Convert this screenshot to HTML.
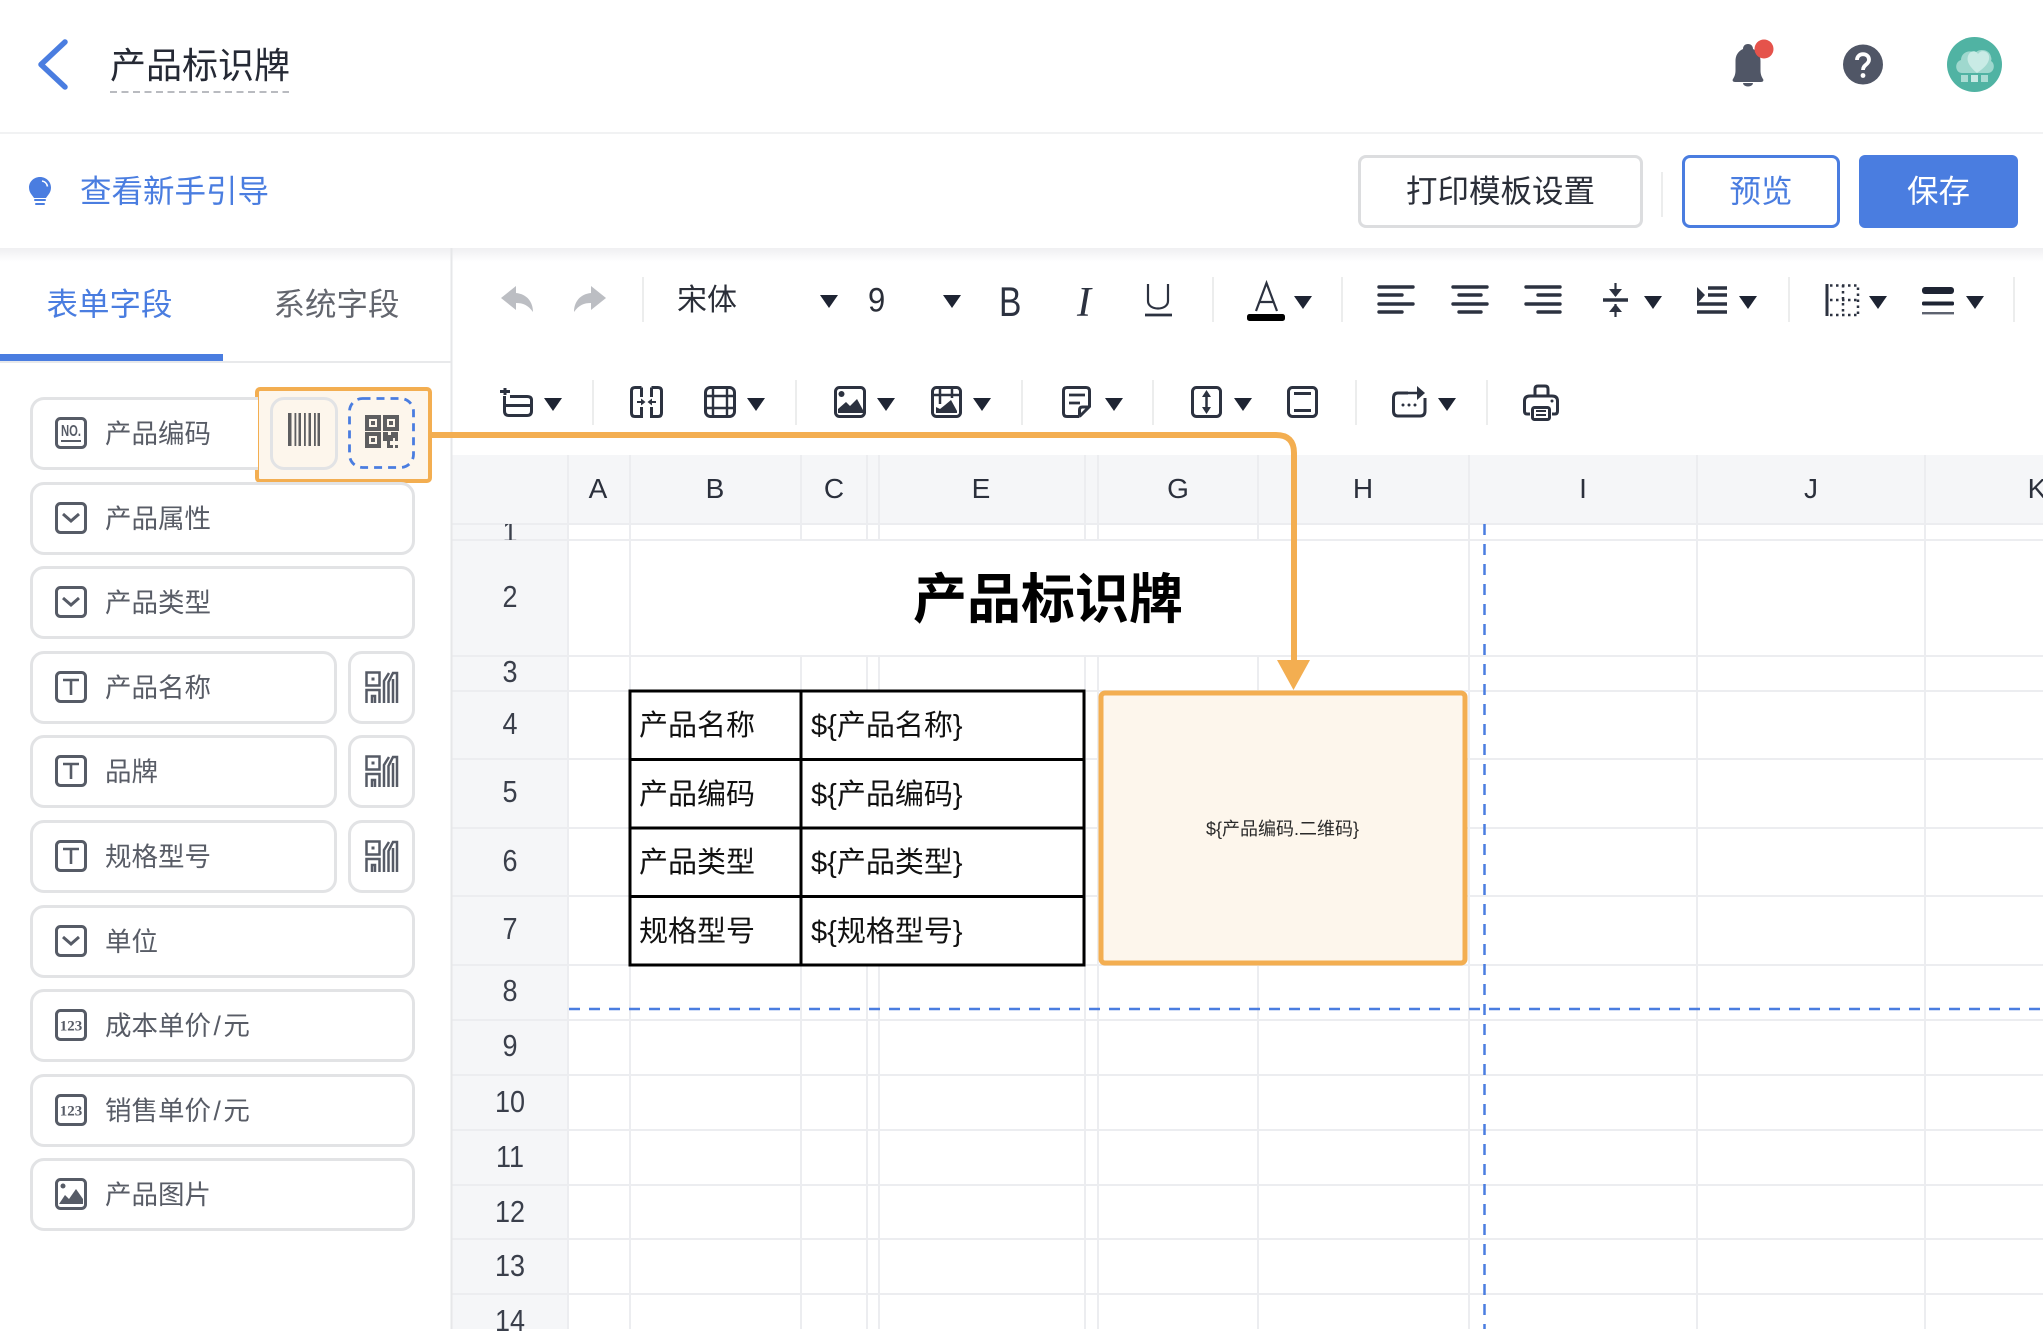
<!DOCTYPE html>
<html lang="zh"><head><meta charset="utf-8"><title>产品标识牌</title>
<style>
html,body{margin:0;padding:0;background:#fff}
body{width:2043px;height:1329px;position:relative;overflow:hidden;font-family:"Liberation Sans","Noto Sans CJK SC",sans-serif;color:#2a2e38}
.a{position:absolute}
.t{position:absolute;white-space:nowrap;line-height:1}
.f{position:absolute;box-sizing:border-box;height:73px;border:3px solid #e2e3e5;border-radius:14px;background:#fff}
.l{position:absolute;left:105px;font-size:26.5px;color:#585c66;white-space:nowrap;line-height:1}
.l span{margin:0 2.5px}
.h{position:absolute;font-size:28px;color:#2b303c;width:60px;text-align:center;line-height:1;top:475px}
.n{position:absolute;left:480px;width:60px;text-align:center;font-size:27px;color:#3a3f4b;line-height:1;transform:scaleY(1.12)}
.c{position:absolute;font-size:29px;color:#111;white-space:nowrap;line-height:1}
svg{position:absolute;left:0;top:0;overflow:visible}
</style></head><body>

<!-- header shadow -->
<div class="a" style="left:0;top:248px;width:2043px;height:14px;background:linear-gradient(#efeff1,#fff);z-index:0"></div>

<svg width="2043" height="1329" viewBox="0 0 2043 1329" style="z-index:1">
<!-- spreadsheet backgrounds -->
<rect x="452" y="455" width="1591" height="69" fill="#f5f6f8"/>
<rect x="452" y="524" width="117" height="805" fill="#f5f6f8"/>
<g stroke="#ecedf0" stroke-width="2" fill="none">
<path d="M452 524H2043M452 540H2043M452 656H2043M452 691H2043M452 759H2043M452 828H2043M452 896H2043M452 965H2043M452 1020H2043M452 1075H2043M452 1130H2043M452 1185H2043M452 1239H2043M452 1294H2043"/>
<path d="M568 455V1329M630 455V1329M1469 455V1329M1697 455V1329M1925 455V1329"/>
<path d="M801 455V540M867 455V540M879 455V540M1085 455V540M1098 455V540M1258 455V540"/>
<path d="M801 656V1329M867 656V1329M879 656V1329M1085 656V1329M1098 656V1329M1258 656V1329"/>
</g>
<!-- borders of panels -->
<path d="M451.500 248V1329" stroke="#e6e7e9" stroke-width="2"/>
<path d="M0 133H2043" stroke="#f1f2f3" stroke-width="2"/>
<path d="M0 362H451" stroke="#e8e9eb" stroke-width="2"/>
<rect x="0" y="354" width="223" height="7" fill="#4a7de0"/>
<!-- table -->
<g stroke="#000" stroke-width="3" fill="#fff">
<rect x="630" y="691" width="454" height="274"/>
<path d="M801 691V965M630 759.500H1084M630 828H1084M630 896.500H1084" fill="none"/>
</g>
<!-- orange box -->
<rect x="1101" y="693" width="364" height="270" rx="4" fill="#fdf6ec" stroke="#f3ae51" stroke-width="5"/>
<!-- dashed guides -->
<path d="M1484.500 524V1329" stroke="#4a7de0" stroke-width="2.500" stroke-dasharray="11 9"/>
<path d="M569 1009H2043" stroke="#4a7de0" stroke-width="2.500" stroke-dasharray="11 9"/>
</svg>

<!-- header -->
<svg width="2043" height="400" style="z-index:3">
<path d="M65 42L41 64.500L65 87" fill="none" stroke="#4a7de0" stroke-width="5.500" stroke-linecap="round" stroke-linejoin="round"/>
<path d="M110 92H289" stroke="#b9bbc0" stroke-width="2" stroke-dasharray="7 4.500"/>
<!-- bulb -->
<path d="M40 177c-6.500 0-11 5-11 10.500 0 5 3 7.500 5 10.500h12c2-3 5-5.500 5-10.500C51 182 46.500 177 40 177z" fill="#4a7de0"/>
<path d="M35 200h10M36 204h8" stroke="#4a7de0" stroke-width="2" stroke-linecap="round"/>
<path d="M42 181c3 .5 5 2.500 5.500 5.500" stroke="#fff" stroke-width="1.600" fill="none"/>
<!-- bell -->
<path d="M1748 44c-3 0-5 2-5 5-5.500 2.500-7.500 7-7.500 12v9c0 4.500-1 6.500-2.500 9-1 1.500 0 3 2 3h26c2 0 3-1.500 2-3-1.500-2.500-2.500-4.500-2.500-9v-9c0-5-2-9.500-7.500-12 0-3-2-5-5-5z" fill="#505666"/>
<path d="M1743 83a5 3.500 0 0 0 10 0z" fill="#505666"/>
<circle cx="1764" cy="49" r="9.500" fill="#e5534b"/>
<!-- help -->
<circle cx="1863" cy="64.500" r="20" fill="#505666"/>
<path d="M1857 60c0-3.500 2.700-5.800 6-5.800 3.400 0 6 2.200 6 5.400 0 5-6 5-6 10.400" fill="none" stroke="#fff" stroke-width="3.800"/>
<circle cx="1863" cy="75.500" r="2.400" fill="#fff"/>
<!-- avatar -->
<circle cx="1974.500" cy="64.500" r="27.500" fill="#50b3a3"/>
<path d="M1962 73c-7 0-8-11-1-13 0-7 8-11 14-7 4-5 15-4 16 4 1 2 0 4 0 4 5 3 3 12-3 12z" fill="#9fd8ce"/>
<path d="M1977 73c-6-5-11-11-9-17 2-6 8-6 10-2 3-5 10-3 11 2 1 7-5 12-12 17z" fill="#c9ebe5"/>
<rect x="1961" y="75" width="7" height="7" fill="#a9dcd3"/><rect x="1971" y="75" width="7" height="7" fill="#c7e9e3"/><rect x="1981" y="75" width="7" height="7" fill="#a9dcd3"/>
<path d="M1662 172V217" stroke="#eceded" stroke-width="2"/>
</svg>
<div class="t" style="left:110px;top:47.500px;font-size:36px;color:#252934;z-index:3">产品标识牌</div>
<div class="t" style="left:80px;top:176px;font-size:31.500px;color:#4a7de0;z-index:3">查看新手引导</div>
<div class="a" style="left:1358px;top:155px;width:285px;height:73px;box-sizing:border-box;border:3px solid #dcdddf;border-radius:8px;background:#fff;text-align:center;font-size:31.500px;line-height:66px;color:#2a2e38;z-index:3">打印模板设置</div>
<div class="a" style="left:1682px;top:155px;width:158px;height:73px;box-sizing:border-box;border:3px solid #4a7de0;border-radius:8px;background:#fff;text-align:center;font-size:31.500px;line-height:66px;color:#4a7de0;z-index:3">预览</div>
<div class="a" style="left:1859px;top:155px;width:159px;height:73px;border-radius:6px;background:#4a7de0;text-align:center;font-size:31.500px;line-height:72px;color:#fff;z-index:3">保存</div>

<!-- tabs -->
<div class="t" style="left:46.500px;top:289px;font-size:31.500px;color:#4a7de0;z-index:3">表单字段</div>
<div class="t" style="left:273.500px;top:289px;font-size:31.500px;color:#63666e;z-index:3">系统字段</div>

<!-- highlight box behind first row -->
<div class="a" style="left:255px;top:387px;width:177px;height:96px;box-sizing:border-box;border:4.500px solid #f3ae51;border-radius:5px;background:#fdf6ec;z-index:2"></div>

<!-- field rows -->
<div style="position:absolute;left:0;top:0;z-index:3">
<div class="f" style="left:30px;top:397px;width:228px;border-right:0;border-radius:14px 0 0 14px"></div>
<div class="f" style="left:270px;top:397px;width:68px;background:#fdf6ec"></div>
<div class="f" style="left:30px;top:482px;width:385px"></div>
<div class="f" style="left:30px;top:566px;width:385px"></div>
<div class="f" style="left:30px;top:651px;width:307px"></div>
<div class="f" style="left:348px;top:651px;width:67px"></div>
<div class="f" style="left:30px;top:735px;width:307px"></div>
<div class="f" style="left:348px;top:735px;width:67px"></div>
<div class="f" style="left:30px;top:820px;width:307px"></div>
<div class="f" style="left:348px;top:820px;width:67px"></div>
<div class="f" style="left:30px;top:905px;width:385px"></div>
<div class="f" style="left:30px;top:989px;width:385px"></div>
<div class="f" style="left:30px;top:1074px;width:385px"></div>
<div class="f" style="left:30px;top:1158px;width:385px"></div>
<div class="l" style="top:421px">产品编码</div>
<div class="l" style="top:505.500px">产品属性</div>
<div class="l" style="top:590px">产品类型</div>
<div class="l" style="top:675px">产品名称</div>
<div class="l" style="top:759px">品牌</div>
<div class="l" style="top:844px">规格型号</div>
<div class="l" style="top:928.500px">单位</div>
<div class="l" style="top:1013px">成本单价<span>/</span>元</div>
<div class="l" style="top:1098px">销售单价<span>/</span>元</div>
<div class="l" style="top:1182px">产品图片</div>
</div>

<svg width="2043" height="1329" style="z-index:4">
<defs>
<g id="dd"><rect x="1.500" y="1.500" width="29" height="29" rx="4" fill="none" stroke="#565b66" stroke-width="3"/><path d="M8 12l8 7 8-7" fill="none" stroke="#565b66" stroke-width="3"/></g>
<g id="tt"><rect x="1.500" y="1.500" width="29" height="29" rx="4" fill="none" stroke="#565b66" stroke-width="3"/><path d="M8 9H24M16 9V24" fill="none" stroke="#565b66" stroke-width="2.600"/></g>
<g id="num"><rect x="1.500" y="1.500" width="29" height="29" rx="4" fill="none" stroke="#565b66" stroke-width="3"/><text x="16" y="21.500" font-size="15" font-weight="700" text-anchor="middle" fill="#565b66" font-family="Liberation Serif,serif">123</text></g>
<g id="st" fill="none" stroke="#565b66" stroke-width="2.500">
<rect x="1.500" y="1.500" width="13" height="13"/><rect x="6.500" y="6.500" width="3" height="3" fill="#565b66" stroke="none"/>
<path d="M1.500 32V19H14.500V32M7 32V25H10V32"/>
<path d="M19 32V10L24 2M23.500 32V11L28 2H32V32M28 32V8"/>
</g>
<path id="car" d="M0 0H18L9 13z" fill="#1e2433"/>
</defs>

<!-- dashed QR button -->
<rect x="349.500" y="398.500" width="64" height="69" rx="13" fill="none" stroke="#4a7de0" stroke-width="2.800" stroke-dasharray="8 6"/>

<!-- row icons -->
<g transform="translate(55,417)"><rect x="1.500" y="1.500" width="29" height="29" rx="4" fill="none" stroke="#565b66" stroke-width="3"/><text x="6" y="19" font-size="16" font-weight="700" fill="#565b66" textLength="20" lengthAdjust="spacingAndGlyphs" font-family="Liberation Sans,sans-serif">NO.</text><path d="M6 24H26" stroke="#565b66" stroke-width="2"/></g>
<use href="#dd" x="55" y="502"/>
<use href="#dd" x="55" y="586"/>
<use href="#tt" x="55" y="671"/>
<use href="#tt" x="55" y="755"/>
<use href="#tt" x="55" y="840"/>
<use href="#dd" x="55" y="925"/>
<use href="#num" x="55" y="1009"/>
<use href="#num" x="55" y="1094"/>
<g transform="translate(55,1178)"><rect x="1.500" y="1.500" width="29" height="29" rx="4" fill="none" stroke="#565b66" stroke-width="3"/><circle cx="8" cy="8" r="2.500" fill="#565b66"/><path d="M4 26L10 17L14 21L21 11L28 21V26z" fill="#565b66"/></g>
<use href="#st" x="365" y="671"/>
<use href="#st" x="365" y="755"/>
<use href="#st" x="365" y="840"/>
<!-- barcode -->
<g fill="#5e5e60"><rect x="288" y="413" width="3.500" height="33"/><rect x="294.500" y="413" width="1.800" height="33"/><rect x="298.500" y="413" width="2.500" height="33"/><rect x="304" y="413" width="1.800" height="33"/><rect x="308.500" y="413" width="2.500" height="33"/><rect x="314" y="413" width="1.800" height="33"/><rect x="317.500" y="413" width="2.500" height="33"/></g>
<!-- qr -->
<g fill="none" stroke="#5e5e60" stroke-width="4"><rect x="367" y="417" width="12" height="12"/><rect x="385" y="417" width="12" height="12"/><rect x="367" y="434" width="12" height="12"/></g>
<g fill="#5e5e60"><rect x="371" y="421" width="4" height="4"/><rect x="389" y="421" width="4" height="4"/><rect x="371" y="438" width="4" height="4"/><path d="M383 432h5v3h3v-3h7v9h-3v-3h-2v3h-3v7h-3v-7h-4z"/><rect x="390" y="445" width="3" height="3"/><rect x="395" y="445" width="3" height="3"/></g>

<!-- toolbar row 1 -->
<path d="M501 298L516 286V293C527 294 533 302 533 312C528 305 523 303 516 303V310z" fill="#bcbec3"/>
<path d="M606 298L591 286V293C580 294 574 302 574 312C579 305 584 303 591 303V310z" fill="#bcbec3"/>
<g stroke="#eceded" stroke-width="2"><path d="M643 277V322M1213 277V322M1342 277V322M1789 277V322M2014 277V322M593 380V425M796 380V425M1022 380V425M1153 380V425M1356 380V425M1487 380V425"/></g>
<use href="#car" x="820" y="295"/><use href="#car" x="943" y="295"/>
<path d="M1148 284V301C1148 311 1168 311 1168 301V284" fill="none" stroke="#2c3240" stroke-width="2.200"/><path d="M1145 315H1172" stroke="#2c3240" stroke-width="2.800"/>
<path d="M1256 311L1266.500 283L1277 311M1259.500 302H1273.500" fill="none" stroke="#2c3240" stroke-width="2.200"/>
<rect x="1247" y="314" width="38" height="7" rx="2.500" fill="#000"/>
<use href="#car" x="1294" y="296"/>
<g stroke="#2c3240" stroke-width="3.400" stroke-linecap="round">
<path d="M1379 287H1413M1379 295H1402M1379 304H1413M1379 312H1402"/>
<path d="M1453 287H1487M1459 295H1481M1453 304H1487M1459 312H1481"/>
<path d="M1526 287H1560M1538 295H1560M1526 304H1560M1538 312H1560"/>
</g>
<path d="M1603 300H1628" stroke="#2c3240" stroke-width="3.400"/>
<path d="M1615.500 283V296M1615.500 304V317" stroke="#2c3240" stroke-width="2.200"/>
<path d="M1609 289L1615.500 297L1622 289zM1609 312L1615.500 304L1622 312z" fill="#2c3240"/>
<use href="#car" x="1644" y="296"/>
<path d="M1697 287L1705 295L1697 304z" fill="#2c3240"/>
<g stroke="#2c3240" stroke-width="3.400"><path d="M1708 288H1727M1708 295H1727M1697 304H1727M1697 312H1727"/></g>
<use href="#car" x="1739" y="296"/>
<path d="M1827 284V316" stroke="#2c3240" stroke-width="3"/>
<path d="M1830 285.500H1858V315M1830 315H1858M1830 300H1858M1843 285V315" fill="none" stroke="#2c3240" stroke-width="2.500" stroke-dasharray="2.500 3.500"/>
<use href="#car" x="1869" y="296"/>
<rect x="1922" y="287" width="32" height="7" rx="3" fill="#1e2433"/><rect x="1922" y="301.500" width="32" height="4" rx="1.500" fill="#1e2433"/><rect x="1922" y="312" width="32" height="2.400" fill="#5e6370"/>
<use href="#car" x="1966" y="296"/>

<!-- toolbar row 2 -->
<g fill="none" stroke="#2c3240" stroke-width="3">
<!-- insert table -->
<path d="M500 391.500H510M505 388V395" stroke-width="3"/>
<path d="M504.500 396V411Q504.500 415.500 509 415.500H527Q531.500 415.500 531.500 411V400Q531.500 396.500 527 396.500H510M504.500 405.500H531.500"/>
<!-- merge -->
<path d="M641.500 387.500H635Q631.500 387.500 631.500 391V413Q631.500 416.500 635 416.500H641.500V407M641.500 387.500V397M651.500 387.500H658Q661.500 387.500 661.500 391V413Q661.500 416.500 658 416.500H651.500V407M651.500 387.500V397"/>
<!-- borders -->
<rect x="705.500" y="387.500" width="29" height="29" rx="5"/>
<path d="M705 396H735M705 408H735M713 387V417M727 387V417" stroke-width="2.400"/>
<!-- image -->
<rect x="835.500" y="387.500" width="29" height="29" rx="4"/>
<!-- grid image -->
<rect x="932.500" y="387.500" width="28" height="29" rx="4"/>
<path d="M932 395H961M940 387V404M952 387V398" stroke-width="2.500"/>
<!-- doc -->
<path d="M1079.500 416.500H1067Q1063.500 416.500 1063.500 413V391Q1063.500 387.500 1067 387.500H1086Q1089.500 387.500 1089.500 391V406.500L1079.500 416.500M1089.500 407H1082.500Q1079.500 407 1079.500 410V416.500"/>
<path d="M1069 395H1085M1069 403H1080" stroke-width="2.800"/>
<!-- height -->
<rect x="1192.500" y="387.500" width="28" height="29" rx="4"/>
<path d="M1206.500 393V411" stroke-width="2.500"/>
<!-- box -->
<rect x="1288.500" y="387.500" width="28" height="29" rx="4"/>
<path d="M1294 393.500H1311M1294 410.500H1311"/>
<!-- rotate -->
<path d="M1408 393H1398Q1393.500 393 1393.500 398V411Q1393.500 416 1398 416H1420Q1425 416 1425 411V398"/>
<path d="M1407 393H1419" stroke-width="2.500"/>
<!-- printer -->
<path d="M1535 396V389Q1535 386 1538 386H1545Q1548 386 1548 389V396M1530 414H1527Q1524.500 414 1524.500 411V401Q1524.500 396 1530 396H1552Q1557.500 396 1557.500 401V411Q1557.500 414 1555 414H1552"/>
<rect x="1532.500" y="407.500" width="17" height="12" rx="2"/>
</g>
<path d="M1417 386L1425 393L1417 400z" fill="#2c3240"/>
<path d="M1206.500 390L1211 397H1202zM1206.500 414L1211 407H1202z" fill="#2c3240"/>
<g fill="#2c3240"><circle cx="1403" cy="405" r="1.500"/><circle cx="1409" cy="405" r="1.500"/><circle cx="1415" cy="405" r="1.500"/>
<!-- merge arrows -->
<path d="M645.500 402l-4.500-3.500v7zM647.500 402l4.500-3.500v7z"/><rect x="637" y="401" width="5" height="2"/><rect x="651" y="401" width="5" height="2"/>
<!-- image content -->
<circle cx="841.500" cy="394" r="3"/><path d="M838 413V409L846 402L850 406L857 399L863 410V413z"/>
<path d="M936 413V407L940 409L945 405L951 400L957 411V413z"/>
<circle cx="1552" cy="401" r="1.500"/>
<path d="M1536 411H1546M1536 415H1546" stroke="#2c3240" stroke-width="2"/></g>
<use href="#car" x="544" y="398"/><use href="#car" x="747" y="398"/><use href="#car" x="877" y="398"/><use href="#car" x="973" y="398"/><use href="#car" x="1105" y="398"/><use href="#car" x="1234" y="398"/><use href="#car" x="1438" y="398"/>

<!-- connector -->
<path d="M431 435H1276Q1294 435 1294 453V664" fill="none" stroke="#f3ae51" stroke-width="6"/>
<path d="M1277 660H1310L1293.500 690z" fill="#f3ae51"/>
</svg>

<!-- toolbar text -->
<div style="position:absolute;left:0;top:0;z-index:4">
<div class="t" style="left:677px;top:286px;font-size:30px;color:#2a2e38">宋体</div>
<div class="t" style="left:868px;top:284px;font-size:31px;color:#2a2e38;transform:scaleY(1.12)">9</div>
<div class="t" style="left:999px;top:281px;font-size:42px;color:#2c3240;transform:scaleX(.8);transform-origin:0 0">B</div>
<div class="t" style="left:1077px;top:282px;font-size:42px;font-style:italic;font-family:'Liberation Serif',serif;color:#2c3240">I</div>
</div>

<!-- sheet text -->
<div style="position:absolute;left:0;top:0;z-index:1;width:2043px;height:1329px;overflow:hidden">
<div class="h" style="left:568px">A</div>
<div class="h" style="left:685px">B</div>
<div class="h" style="left:804px">C</div>
<div class="h" style="left:951px">E</div>
<div class="h" style="left:1148px">G</div>
<div class="h" style="left:1333px">H</div>
<div class="h" style="left:1553px">I</div>
<div class="h" style="left:1781px">J</div>
<div class="h" style="left:2007px">K</div>
</div>
<div style="position:absolute;left:0;top:0;z-index:2">
<div class="a" style="left:480px;top:524px;width:60px;height:16px;overflow:hidden"><div class="n" style="left:0;top:-5px">1</div></div>
<div class="n" style="top:584px">2</div>
<div class="n" style="top:659px">3</div>
<div class="n" style="top:711px">4</div>
<div class="n" style="top:779px">5</div>
<div class="n" style="top:848px">6</div>
<div class="n" style="top:916px">7</div>
<div class="n" style="top:978px">8</div>
<div class="n" style="top:1033px">9</div>
<div class="n" style="top:1089px">10</div>
<div class="n" style="top:1144px">11</div>
<div class="n" style="top:1199px">12</div>
<div class="n" style="top:1253px">13</div>
<div class="n" style="top:1308px">14</div>

<div class="t" style="left:913px;top:573px;font-size:54px;font-weight:700;color:#000">产品标识牌</div>
<div class="c" style="left:639px;top:712px">产品名称</div>
<div class="c" style="left:811px;top:712px">${产品名称}</div>
<div class="c" style="left:639px;top:781px">产品编码</div>
<div class="c" style="left:811px;top:781px">${产品编码}</div>
<div class="c" style="left:639px;top:849px">产品类型</div>
<div class="c" style="left:811px;top:849px">${产品类型}</div>
<div class="c" style="left:639px;top:918px">规格型号</div>
<div class="c" style="left:811px;top:918px">${规格型号}</div>
<div class="t" style="left:1206px;top:820px;font-size:18px;color:#2a2a2a">${产品编码.二维码}</div>
</div>
</body></html>
